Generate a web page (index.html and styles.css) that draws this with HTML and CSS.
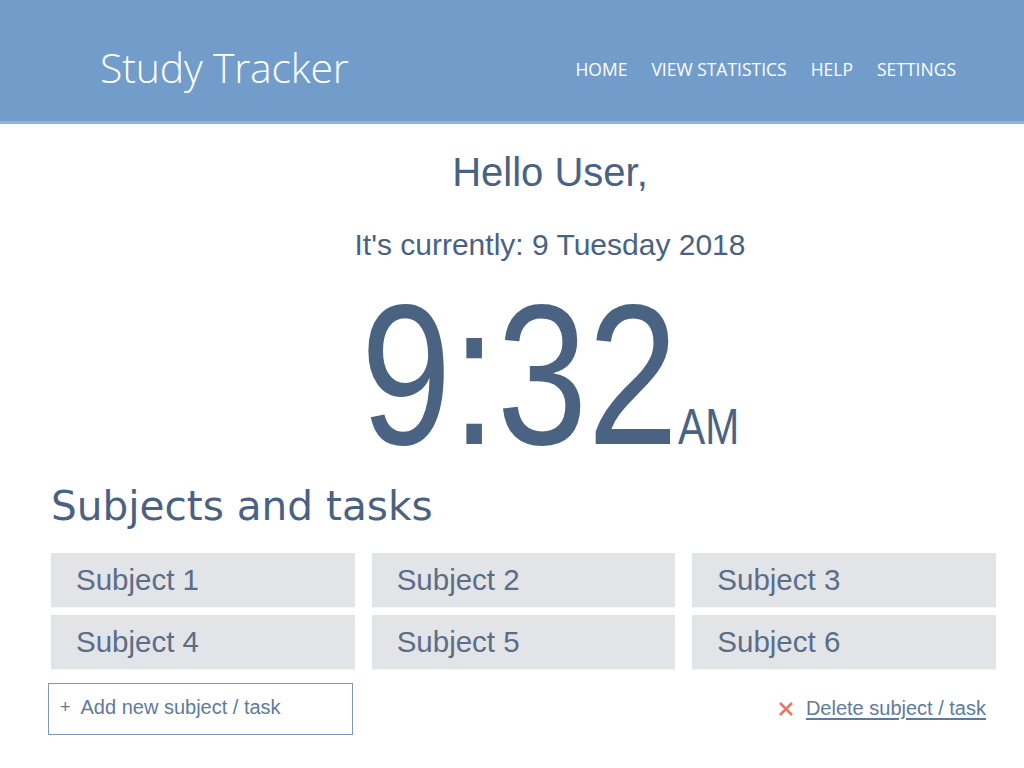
FILE: index.html
```html
<!DOCTYPE html>
<html lang="en">
<head>
<meta charset="utf-8">
<title>Study Tracker</title>
<link rel="stylesheet" href="styles.css">
</head>
<body>
<header class="topbar">
  <div class="brand">Study Tracker</div>
  <nav class="nav">
    <a href="#">HOME</a>
    <a href="#">VIEW STATISTICS</a>
    <a href="#">HELP</a>
    <a href="#">SETTINGS</a>
  </nav>
</header>
<main class="main">
  <section class="greeting">
    <h1 class="hello">Hello User,</h1>
    <p class="date">It's currently: 9 Tuesday 2018</p>
    <div class="clock"><span class="time">9:32</span><span class="ampm">AM</span></div>
  </section>
  <section class="subjects">
    <h2 class="subjects-title">Subjects and tasks</h2>
    <div class="grid">
      <div class="subject">Subject 1</div>
      <div class="subject">Subject 2</div>
      <div class="subject">Subject 3</div>
      <div class="subject">Subject 4</div>
      <div class="subject">Subject 5</div>
      <div class="subject">Subject 6</div>
    </div>
    <div class="actions">
      <button class="add"><span class="plus">+</span>Add new subject / task</button>
      <a class="delete" href="#">
        <svg class="x" width="16" height="16" viewBox="0 0 16 16"><path d="M2 2 L14 14 M14 2 L2 14" stroke="#e07b66" stroke-width="2.6" stroke-linecap="butt"/></svg>
        <span class="delete-text">Delete subject / task</span>
      </a>
    </div>
  </section>
</main>
</body>
</html>
```
FILE: styles.css
```css
* { box-sizing: border-box; }
html, body { margin: 0; padding: 0; background: #ffffff; }
body { font-family: "Liberation Sans", Arial, sans-serif; color: #4a6282; }

.topbar {
  height: 124px;
  background: #729dcb;
  border-bottom: 3px solid #8fb4dc;
  display: flex;
  align-items: center;
  justify-content: space-between;
  padding: 0 68px 2px 100px;
}
.brand {
  font-family: "Open Sans", sans-serif;
  font-weight: 300;
  font-size: 41px;
  color: #ffffff;
  letter-spacing: -0.2px;
  line-height: 1;
  margin-top: 16px;
}
.nav { display: flex; gap: 24px; padding-top: 20px; }
.nav a {
  font-family: "Open Sans", sans-serif;
  font-size: 17.5px;
  color: #ffffff;
  text-decoration: none;
  line-height: 1;
}

.greeting {
  padding-left: 76px;
  text-align: center;
}
.hello {
  margin: 28px 0 0;
  font-size: 40px;
  font-weight: normal;
  line-height: 1;
}
.date {
  margin: 38px 0 0;
  font-size: 30px;
  line-height: 1;
}
.clock {
  margin-top: 15px;
  height: 200px;
  line-height: 1;
  transform: scaleX(0.815);
  white-space: nowrap;
  color: #4a6382;
}
.time { font-size: 200px; }
.ampm { font-size: 50px; }

.subjects { padding: 0 28px 0 48px; }
.subjects-title {
  margin: 11px 0 0 3px;
  font-family: "DejaVu Sans", Verdana, sans-serif;
  font-weight: normal;
  font-size: 40.6px;
  line-height: 1;
  color: #4a6282;
}
.grid {
  margin: 26px 0 0 3px;
  display: grid;
  grid-template-columns: repeat(3, 1fr);
  column-gap: 17px;
  row-gap: 8px;
}
.subject {
  height: 54px;
  background: #e3e4e8;
  display: flex;
  align-items: center;
  padding-left: 25px;
  font-size: 29.5px;
  color: #5a6e88;
  box-shadow: 0 1px 1px rgba(0,0,0,0.04);
}

.actions {
  margin-top: 14px;
  display: flex;
  justify-content: space-between;
  align-items: center;
  padding-right: 10px;
}
.add {
  width: 305px;
  height: 52px;
  background: #ffffff;
  border: 1.5px solid #7f98b7;
  text-align: left;
  padding: 0 0 2px 11px;
  font-family: "Liberation Sans", Arial, sans-serif;
  font-size: 20px;
  color: #5f7a9c;
  display: flex;
  align-items: center;
}
.plus { font-size: 18px; margin-right: 10px; }
.delete {
  display: flex;
  align-items: center;
  gap: 12px;
  text-decoration: none;
}
.delete-text {
  font-size: 20px;
  color: #5f7a9c;
  text-decoration: underline;
  text-underline-offset: 3px;
}
```
